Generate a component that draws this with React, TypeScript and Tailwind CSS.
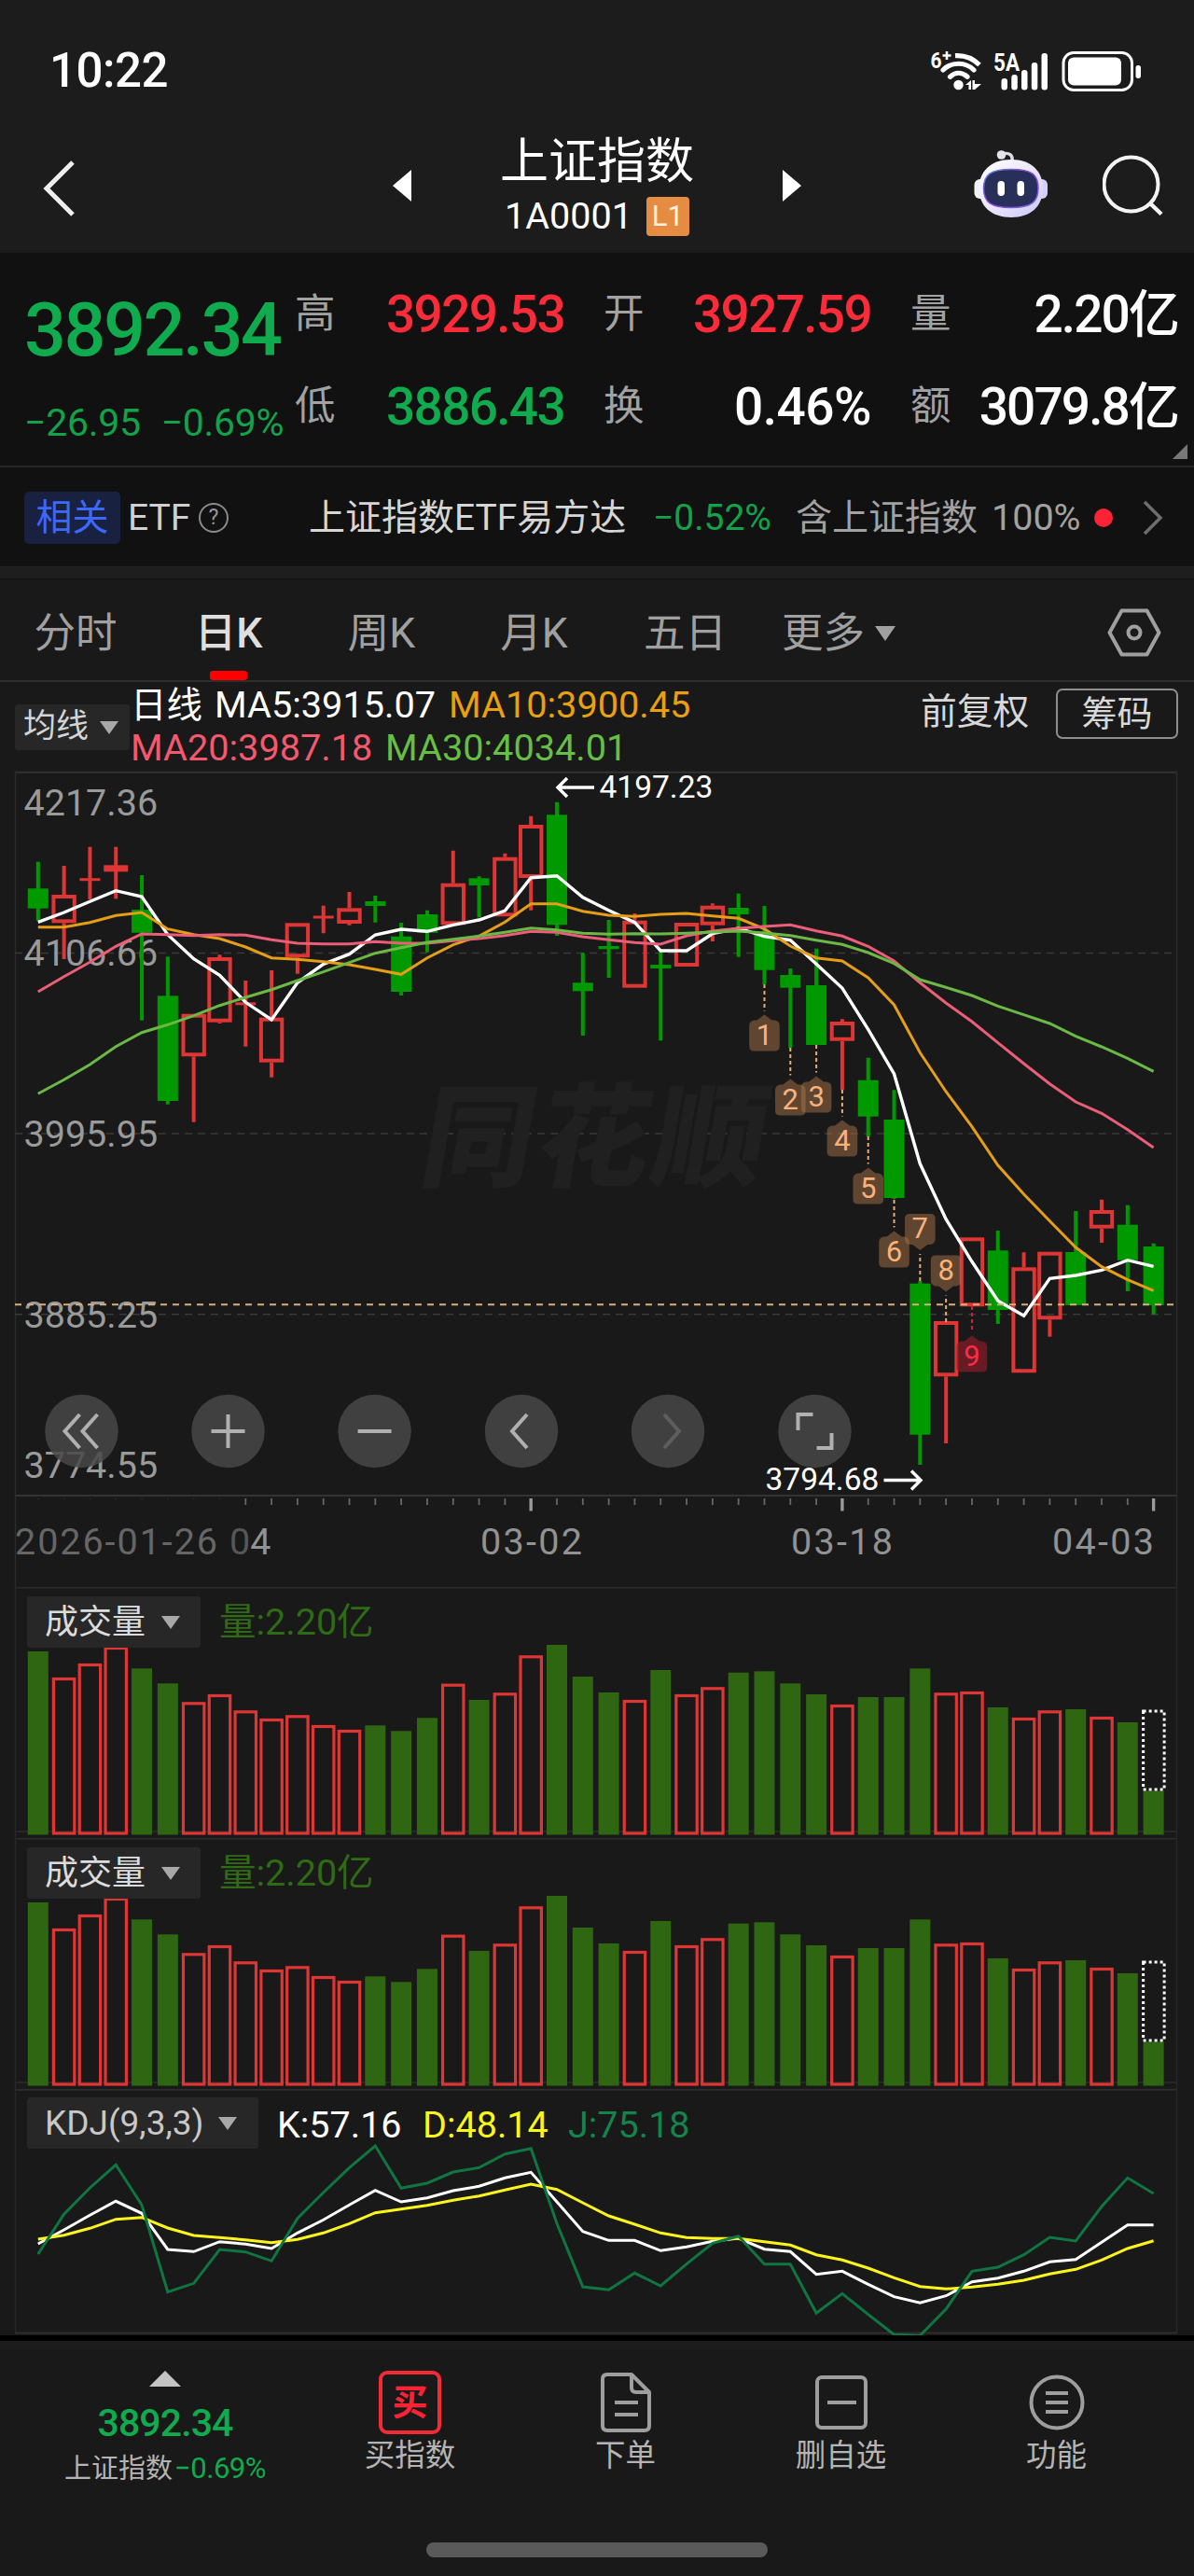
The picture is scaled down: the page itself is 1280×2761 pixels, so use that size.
import { useState } from "react";

// horizontal geometry shared by every chart panel
const firstX = 40.8;
const stepX = 27.81;
const xAt = (i: number) => firstX + i * stepX;

const red = "#de3535";
const green = "#009a00";

// [up|down, high, top, bottom, low]
type Candle = ["u" | "d", number, number, number, number];

const candles: Candle[] = [
    ["d", 923.7, 952.3, 973.7, 986.7],
    ["u", 928, 959, 989.3, 1028],
    ["u", 907.7, 941.2, 944.2, 964],
    ["u", 907.7, 927.3, 934.3, 963.3],
    ["d", 938, 975, 999.7, 1093.7],
    ["d", 1025.3, 1067.3, 1180, 1183.7],
    ["u", 1086.7, 1086.7, 1132.3, 1202.7],
    ["u", 1023.3, 1026, 1095.7, 1097],
    ["u", 1051, 1074.3, 1077.3, 1121.7],
    ["u", 1040, 1090.7, 1138.7, 1154.7],
    ["u", 989.3, 989.3, 1026.3, 1043.7],
    ["u", 970.7, 981.5, 984.5, 1000.3],
    ["u", 956, 973.3, 990, 991.7],
    ["d", 960, 966, 971, 988.7],
    ["d", 989, 1003.7, 1063, 1067],
    ["d", 975.7, 980, 999.7, 1020.7],
    ["u", 911.7, 946.7, 991.3, 991.3],
    ["d", 939.3, 941.3, 949, 983.3],
    ["u", 914.7, 918.7, 982.3, 982.3],
    ["u", 874.7, 884, 941, 975.7],
    ["d", 859.7, 873.3, 991.3, 1003],
    ["d", 1021.3, 1053.3, 1062.3, 1110],
    ["d", 986, 1014, 1017.3, 1048],
    ["u", 979, 986.7, 1058.7, 1058.7],
    ["d", 1020, 1034, 1038, 1115.3],
    ["u", 989, 989, 1036, 1036],
    ["u", 968.3, 970.7, 991.7, 1009],
    ["d", 957.7, 973, 980, 1025.7],
    ["d", 971, 1001, 1039.7, 1055],
    ["d", 1038, 1045, 1058.7, 1123],
    ["d", 1016.7, 1056, 1120, 1120],
    ["u", 1092.3, 1095, 1115.7, 1168.3],
    ["d", 1133.7, 1157.7, 1196.7, 1218.3],
    ["d", 1168.3, 1200, 1284, 1285],
    ["d", 1373, 1375.7, 1537.7, 1570],
    ["u", 1416, 1416, 1475.3, 1547],
    ["u", 1326.3, 1326.3, 1400.3, 1400.3],
    ["d", 1319, 1340.3, 1404, 1419],
    ["u", 1342.3, 1358.3, 1471.3, 1471.3],
    ["u", 1341.7, 1341.7, 1414.3, 1432.7],
    ["d", 1298, 1342, 1399, 1399],
    ["u", 1285.7, 1297, 1316.7, 1332],
    ["d", 1291.7, 1312.7, 1350.7, 1384],
    ["d", 1332.7, 1336, 1399, 1408.7],
];

const ma5 = [988.3, 978, 966.3, 954.7, 961, 1001.7, 1027.7, 1045.3, 1074.3, 1093, 1053.3, 1033.3, 1022.7, 1002, 996, 998.3, 991.3, 986, 976, 940.7, 938.7, 961.7, 975.7, 988.7, 1019, 1019, 1000.7, 995, 1003.7, 1007.7, 1033.3, 1059, 1103.3, 1151, 1247.3, 1306.7, 1352.3, 1394.3, 1410.3, 1370.3, 1367, 1361.3, 1350.7, 1357.3];
const ma10 = [993.7, 993.7, 988.7, 981.3, 978, 995.7, 1001.7, 1006, 1015, 1026.7, 1028.3, 1030.7, 1034, 1039, 1044.3, 1026.7, 1012.7, 1003.3, 988.3, 968.7, 968.7, 976.7, 981, 982.3, 980, 979, 981.7, 984.3, 995.7, 1014, 1026.7, 1030, 1048, 1077, 1128.3, 1170, 1207.7, 1249, 1280, 1308.7, 1337, 1357.7, 1371.7, 1383.3];
const ma20 = [1063, 1046.7, 1031.3, 1014.3, 1001, 1001.7, 1002.7, 1001.7, 1002.3, 1007.3, 1011, 1011.7, 1011.7, 1009.3, 1011, 1011, 1008.3, 1006, 1002.7, 998.3, 999.3, 1004, 1007.3, 1010.3, 1012, 1003, 998, 995, 993, 991.3, 997.7, 1003.3, 1014.3, 1030, 1053.3, 1075, 1095, 1117.7, 1140, 1161.7, 1181, 1193.3, 1210.7, 1230];
const ma30 = [1172.3, 1157.3, 1141, 1121.7, 1106.7, 1098.3, 1088.7, 1077.7, 1069, 1060.7, 1051, 1041.7, 1031.7, 1021.7, 1015.7, 1010, 1006.7, 1003.3, 999.3, 994.7, 996.7, 1000.3, 1001.3, 1000.7, 1001, 1000.3, 999, 998, 1000, 1002.7, 1007.7, 1012.3, 1021, 1032.7, 1050, 1058.3, 1067, 1078.3, 1087.7, 1097, 1110.7, 1122, 1134.3, 1148.3];

// bar tops inside a volume panel, same order as the candles
const volumeTops = [69, 97, 82, 64, 87.3, 103.3, 123.3, 115, 132.3, 141, 137.3, 148, 153, 148.3, 154.3, 140.3, 103.7, 121, 113.3, 73.3, 62, 96, 113, 121, 89, 115, 107.3, 91.7, 90.3, 103.3, 115, 126, 118, 118, 87.3, 113.3, 112, 129, 140, 132.3, 131, 139, 145, 218.5];

const kLine = [2405, 2390, 2374.3, 2359.3, 2372.3, 2411, 2413.3, 2402.7, 2405.3, 2410, 2393.3, 2379.3, 2363.3, 2347.7, 2360, 2355.7, 2348, 2343.3, 2334.3, 2328.3, 2360, 2391.7, 2401.3, 2401.3, 2412.3, 2408.3, 2402.3, 2399, 2410.7, 2413.3, 2437.7, 2434.3, 2448.3, 2461.7, 2468.3, 2460.7, 2445.7, 2441.7, 2434.3, 2424.3, 2421.7, 2403.3, 2384.7, 2384.7];
const dLine = [2400, 2395.7, 2388.3, 2378.7, 2376.7, 2388, 2396, 2398.3, 2400.7, 2403.7, 2400.3, 2393.3, 2383.3, 2371.7, 2367.7, 2363.7, 2358.3, 2353.7, 2347.3, 2341, 2346.7, 2361, 2375, 2384, 2393.3, 2398.3, 2399.3, 2399.3, 2402.7, 2406.3, 2416.7, 2422.3, 2431, 2441.3, 2450.7, 2453.3, 2451.3, 2448.3, 2444, 2437.3, 2432.3, 2422.3, 2410, 2401.7];
const jLine = [2416, 2373.3, 2345, 2320.3, 2363.3, 2456.7, 2447.3, 2411, 2413.7, 2423.3, 2377.7, 2350, 2323.3, 2300, 2345.3, 2340, 2328, 2323.3, 2308.7, 2302.7, 2383.3, 2451, 2454.3, 2436.3, 2450, 2426.7, 2404.3, 2396.7, 2426.7, 2426.7, 2479.3, 2458.3, 2480.7, 2502.3, 2503.3, 2475, 2434.3, 2430, 2416.7, 2398, 2402, 2365, 2334.3, 2351];

// nine-turn markers: index, label, y of the pointed tip, direction, start of the dotted lead
const turns = [
    { i: 28, n: "1", tip: 1087.5, up: true, from: 1055 },
    { i: 29, n: "2", tip: 1156.5, up: true, from: 1123 },
    { i: 30, n: "3", tip: 1153.5, up: true, from: 1120 },
    { i: 31, n: "4", tip: 1200.5, up: true, from: 1168 },
    { i: 32, n: "5", tip: 1251.5, up: true, from: 1218 },
    { i: 33, n: "6", tip: 1319.5, up: true, from: 1286 },
    { i: 34, n: "7", tip: 1340, up: false, from: 1373 },
    { i: 35, n: "8", tip: 1384.5, up: false, from: 1417 },
    { i: 36, n: "9", tip: 1431.5, up: true, from: 1400 },
];

const points = (ys: number[]) => ys.map((y, i) => `${xAt(i).toFixed(1)},${y}`).join(" ");

const Line = ({ ys, color, width = 3 }: { ys: number[]; color: string; width?: number }) => (
    <polyline points={points(ys)} fill="none" stroke={color} strokeWidth={width} />
);

const Caret = ({ className }: { className: string }) => (
    <svg viewBox="0 0 20 14" preserveAspectRatio="none" className={className}>
        <path d="M0 0H20L10 14Z" fill="currentColor" />
    </svg>
);

const StatusBar = () => (
    <div className="flex h-[130px] items-start justify-between pl-[53px] pr-[50px] pt-[50px]">
        <span className="text-[51px] font-medium leading-[52px] tracking-[-0.5px] text-white">10:22</span>
        <svg viewBox="990 50 240 52" className="h-[52px] w-[240px]" fill="white">
            <text x="997.5" y="73" fontSize="24" fontWeight="700" textLength="12" lengthAdjust="spacingAndGlyphs">6</text>
            <path d="M1010.5 59.5h9M1015 55v9" stroke="white" strokeWidth="2.6" />
            <circle cx="1027.5" cy="91" r="5.2" />
            <g fill="none" stroke="white" strokeWidth="5.2">
                <path d="M1024 59.6C1034 59 1043 62.500 1050 69.500" />
                <path d="M1011 75C1020 66 1035 66 1044 75" strokeLinecap="round" />
                <path d="M1018.500 82.300C1024 77 1031 77 1037 82.300" strokeLinecap="round" />
            </g>
            <path d="M1035 91L1041 86V96H1038.500V91ZM1042.500 86L1045 86V90H1052L1045 96H1042.500Z" />
            <text x="1065" y="76" fontSize="25" fontWeight="700" textLength="28" lengthAdjust="spacingAndGlyphs">5A</text>
            <rect x="1073.500" y="84" width="6.500" height="12.500" rx="3" />
            <rect x="1084.300" y="80" width="6.500" height="16.500" rx="3" />
            <rect x="1095" y="75" width="6.500" height="21.500" rx="3" />
            <rect x="1105.800" y="67" width="6.500" height="29.500" rx="3" />
            <rect x="1116.500" y="57" width="6.500" height="39.500" rx="3" />
            <rect x="1140" y="56.500" width="73.500" height="40" rx="11" fill="none" stroke="white" strokeWidth="3" />
            <rect x="1145" y="61.500" width="57" height="30" rx="6" />
            <rect x="1217.500" y="70" width="5.500" height="14" rx="2.700" />
        </svg>
    </div>
);

const Robot = () => (
    <svg viewBox="0 0 80 74" className="ml-[185px] mt-[30px] h-[74px] w-[80px]">
        <defs>
            <linearGradient id="shell" x1="0" y1="0" x2="1" y2="1">
                <stop offset="0" stopColor="#ffffff" />
                <stop offset="0.55" stopColor="#e9e4fb" />
                <stop offset="1" stopColor="#c9c6f7" />
            </linearGradient>
            <linearGradient id="rim" x1="0" y1="0" x2="1" y2="1">
                <stop offset="0" stopColor="#5b8fd8" />
                <stop offset="0.5" stopColor="#8a3fd0" />
                <stop offset="1" stopColor="#6a6df0" />
            </linearGradient>
        </defs>
        <path d="M30 5C38 3 42 6 41 13" fill="none" stroke="#dcdce4" strokeWidth="3.500" />
        <circle cx="29.500" cy="6" r="4.800" fill="#e4e4ea" />
        <rect x="0.500" y="32" width="14" height="21" rx="6" fill="#f1effa" />
        <rect x="65" y="32" width="14" height="21" rx="6" fill="#d4d0f6" />
        <path d="M40 11C62 11 74 24 74 42C74 61 61 73 40 73C19 73 5.500 61 5.500 42C5.500 24 18 11 40 11Z" fill="url(#shell)" />
        <path d="M40 21.500C62 21.500 69 27 69 42C69 57 61 62.500 40 62.500C19 62.500 10.500 57 10.500 42C10.500 27 18 21.500 40 21.500Z" fill="#28305a" stroke="url(#rim)" strokeWidth="1.500" />
        <rect x="25.500" y="34" width="7.500" height="16" rx="3.700" fill="white" />
        <rect x="46.500" y="34" width="7.500" height="16" rx="3.700" fill="white" />
    </svg>
);

const TitleBar = () => (
    <div className="flex h-[141px] items-start pl-[42px]">
        <svg viewBox="0 0 40 64" className="mt-[40px] h-[64px] w-[40px]" fill="none" stroke="#eeeeee" strokeWidth="5">
            <path d="M36 4L8 32L36 60" />
        </svg>
        <svg viewBox="0 0 20 34" className="ml-[339px] mt-[52px] h-[34px] w-[20px]">
            <path d="M20 0V34L0 17Z" fill="white" />
        </svg>
        <div className="ml-[86px] mt-[10px] flex w-[226px] flex-col items-center">
            <h1 className="whitespace-nowrap text-[52px] font-normal leading-[68px] text-white">上证指数</h1>
            <div className="mt-[2px] flex items-center gap-[15px]">
                <span className="text-[39.5px] leading-[44px] text-white">1A0001</span>
                <span className="flex h-[42px] w-[46px] items-center justify-center rounded-[4px] bg-[#e68c42] text-[31px] text-[#fff1e2]">L1</span>
            </div>
        </div>
        <svg viewBox="0 0 20 34" className="ml-[86px] mt-[52px] h-[34px] w-[20px]">
            <path d="M0 0V34L20 17Z" fill="white" />
        </svg>
        <Robot />
        <svg viewBox="0 0 68 68" className="ml-[58px] mt-[36px] h-[68px] w-[68px]" fill="none" stroke="#f4f4f4" strokeWidth="4">
            <circle cx="30.500" cy="31.500" r="29" />
            <path d="M51 52L63 63.500" strokeWidth="4.500" />
        </svg>
    </div>
);

const Stat = ({ label, value, color, className }: { label: string; value: string; color: string; className: string }) => (
    <div className={`flex items-center justify-between ${className}`}>
        <span className="text-[43.5px] leading-[60px] text-[#a2a2a2]">{label}</span>
        <span className={`whitespace-nowrap text-[55px] font-medium leading-[60px] ${color}`}>{value}</span>
    </div>
);

const Quote = () => (
    <div className="flex h-[230px] border-b-2 border-[#252525] bg-[#111111]">
        <div className="flex w-[316px] flex-col pl-[26px] pt-[37px]">
            <span className="text-[79px] font-medium leading-[92px] tracking-[-2.4px] text-[#0fab4e]">3892.34</span>
            <div className="mt-[29px] flex gap-[22px] whitespace-nowrap text-[41px] leading-[48px] tracking-[-0.3px] text-[#12a24c]">
                <span>−26.95</span>
                <span>−0.69%</span>
            </div>
        </div>
        <div className="flex flex-1 flex-col gap-[39px] pt-[36px]">
            <div className="flex">
                <Stat label="高" value="3929.53" color="tracking-[-1.7px] text-[#fb2c3a]" className="w-[289px]" />
                <Stat label="开" value="3927.59" color="tracking-[-1.7px] text-[#fb2c3a]" className="ml-[42px] w-[287px]" />
                <Stat label="量" value="2.20亿" color="tracking-[-1.9px] text-white" className="ml-[42px] w-[287px]" />
            </div>
            <div className="flex">
                <Stat label="低" value="3886.43" color="tracking-[-1.7px] text-[#0fab4e]" className="w-[289px]" />
                <Stat label="换" value="0.46%" color="tracking-[-0.5px] text-white" className="ml-[42px] w-[287px]" />
                <Stat label="额" value="3079.8亿" color="tracking-[-1.9px] text-white" className="ml-[42px] w-[287px]" />
            </div>
            <svg viewBox="0 0 16 16" className="-mt-[29px] mr-[7px] h-4 w-4 self-end">
                <path d="M16 0V16H0Z" fill="#777777" />
            </svg>
        </div>
    </div>
);

const RelatedEtf = () => (
    <div className="flex h-[107px] items-center whitespace-nowrap border-b border-[#222222] bg-[#111111] pl-[26px] pt-[2px] text-[39px]">
        <span className="flex h-[56px] w-[103px] items-center justify-center rounded-[5px] bg-[#192140] text-[#3c68fb]">相关</span>
        <span className="ml-[8px] w-[68px] text-[#d0d0d0]">ETF</span>
        <span className="ml-[8px] flex h-[32px] w-[32px] items-center justify-center rounded-full border-2 border-[#8a8a8a] text-[23px] text-[#999999]">?</span>
        <span className="ml-[86px] w-[343px] text-[#d6d6d6]">上证指数ETF易方达</span>
        <span className="ml-[26px] w-[128px] text-[#12a24c]">−0.52%</span>
        <span className="ml-[25px] text-[39px] text-[#a2a2a2]">含上证指数</span>
        <span className="ml-[15px] w-[98px] text-[39.5px] text-[#a2a2a2]">100%</span>
        <span className="ml-[12px] h-[20px] w-[20px] rounded-full bg-[#fb2334]" />
        <svg viewBox="0 0 22 40" className="ml-[32px] h-[40px] w-[22px]" fill="none" stroke="#6e6e6e" strokeWidth="3.500">
            <path d="M2 3L19 20L2 37" />
        </svg>
    </div>
);

const tabs = [
    { name: "分时", className: "w-[162px]" },
    { name: "日K", className: "w-[166px]" },
    { name: "周K", className: "w-[162px]" },
    { name: "月K", className: "w-[165px]" },
    { name: "五日", className: "w-[159px]" },
];

const Tabs = () => {
    const [active, setActive] = useState("日K");

    return (
        <div className="flex h-[111px] items-center border-b-2 border-[#2e2e2e] border-t border-t-[#111111]">
            {tabs.map((tab) => (
                <button
                    key={tab.name}
                    onClick={() => setActive(tab.name)}
                    className={`relative flex h-full items-center justify-center pt-[8px] text-[44.5px] ${tab.className} ${active == tab.name ? "font-medium text-[#dedede]" : "text-[#a0a0a0]"}`}
                >
                    {tab.name}
                    {active == tab.name && <span className="absolute bottom-0 h-[10px] w-[40px] rounded-[3px] bg-[#ff0000]" />}
                </button>
            ))}
            <button className="ml-[24px] flex items-center gap-[11px] pt-[8px] text-[44.5px] text-[#a0a0a0]">
                更多
                <Caret className="h-[16px] w-[22px]" />
            </button>
            <svg viewBox="0 0 58 52" className="ml-[227px] mt-[6px] h-[52px] w-[58px]" fill="none" stroke="#a0a0a0" strokeWidth="4">
                <path d="M15.500 2.500H42.500L55.500 26L42.500 49.500H15.500L2.500 26Z" strokeLinejoin="round" />
                <circle cx="29" cy="26" r="6.500" />
            </svg>
        </div>
    );
};

const Legend = () => (
    <div className="flex h-[96px] whitespace-nowrap pl-[16px]">
        <div className="mt-[24px] flex h-[49px] w-[123px] items-center justify-between rounded-[3px] bg-[#272727] pl-[9px] pr-[12px] text-[35px] text-[#d4d4d4]">
            均线
            <Caret className="h-[14px] w-[20px] text-[#a8a8a8]" />
        </div>
        <div className="ml-[1px] w-[761px] text-[39.7px] leading-[46px]">
            <div className="mt-[2px] flex text-white">
                <span className="text-[38.5px]">日线</span>
                <span className="ml-[13px] w-[251px]">MA5:3915.07</span>
                <span className="text-[#eaa00e]">MA10:3900.45</span>
            </div>
            <div className="flex">
                <span className="w-[273px] text-[#f4586f]">MA20:3987.18</span>
                <span className="text-[#66bf42]">MA30:4034.01</span>
            </div>
        </div>
        <span className="ml-[86px] mt-[7px] w-[118px] text-[38.8px] leading-[50px] text-[#d8d8d8]">前复权</span>
        <button className="ml-[27px] mt-[7px] flex h-[54px] w-[131px] items-center justify-center rounded-[7px] border-2 border-[#8e8e8e] text-[38px] text-[#d8d8d8]">
            筹码
        </button>
    </div>
);

const CandleShape = ({ candle, i }: { candle: Candle; i: number }) => {
    const [dir, high, top, bottom, low] = candle;
    const x = xAt(i);
    const h = bottom - top;

    if (dir == "d") {
        return (
            <g fill={green}>
                <rect x={x - 2} y={high} width="4" height={low - high} />
                <rect x={x - 11} y={top} width="22" height={h} />
            </g>
        );
    }
    // tiny bodies collapse into a solid cross
    if (h < 10) {
        return (
            <g fill={red}>
                <rect x={x - 2} y={high} width="4" height={low - high} />
                <rect x={h < 5 ? x - 11 : x - 13} y={top} width={h < 5 ? 22 : 26} height={h} />
            </g>
        );
    }
    return (
        <g>
            <path d={`M${x} ${high}V${top}M${x} ${bottom}V${low}`} stroke={red} strokeWidth="4" />
            <rect x={x - 11.2} y={top + 2} width="22.400" height={h - 4} fill="none" stroke={red} strokeWidth="4" />
        </g>
    );
};

const TurnMarker = ({ i, n, tip, up, from }: (typeof turns)[number]) => {
    const x = xAt(i);
    const isNine = n == "9";
    const s = up ? 1 : -1;
    const body = `M${x} ${tip}L${x + 8} ${tip + s * 6}H${x + 11}Q${x + 16.3} ${tip + s * 7} ${x + 16.3} ${tip + s * 12}V${tip + s * 34}Q${x + 16.3} ${tip + s * 39} ${x + 11} ${tip + s * 39}H${x - 11}Q${x - 16.3} ${tip + s * 39} ${x - 16.3} ${tip + s * 34}V${tip + s * 12}Q${x - 16.3} ${tip + s * 7} ${x - 11} ${tip + s * 6}H${x - 8}Z`;
    return (
        <g>
            <path d={`M${x} ${from}V${tip - s * 4}`} stroke={isNine ? "#c8243a" : "#e8ab7c"} strokeWidth="2" strokeDasharray="4 3" />
            <path d={body} fill={isNine ? "#8a1c26" : "#a8744a"} fillOpacity={isNine ? 0.7 : 0.5} />
            <text x={x} y={up ? tip + 32 : tip - 13} textAnchor="middle" fontSize="31" fill={isNine ? "#fb2c48" : "#fbb27a"}>{n}</text>
        </g>
    );
};

const controls = [
    { cx: 87.5, icon: "M-2 -18L-18 0L-2 18M17 -18L1 0L17 18", color: "#b0b0b0" },
    { cx: 244.5, icon: "M-18 0H18M0 -18V18", color: "#b0b0b0" },
    { cx: 401.6, icon: "M-18 0H18", color: "#b0b0b0" },
    { cx: 559, icon: "M6 -18L-10 0L6 18", color: "#b0b0b0" },
    { cx: 716, icon: "M-4 -18L12 0L-4 18", color: "#5e5e5e" },
    { cx: 873.5, icon: "M-2 -18H-18V-1M2 18H18V2", color: "#b0b0b0" },
];

const PriceChart = () => (
    <svg viewBox="0 827 1280 874" className="block h-[874px] w-full overflow-visible">
        <g fill="none" stroke="#2b2b2b" strokeWidth="1.500">
            <path d="M16 827.800H1262M16 1603H1262" stroke="#333333" strokeWidth="2" />
            <path d="M16.500 827V1701M1261.500 827V1701" />
            <path d="M16 1021.500H1262M16 1215H1262M16 1408.800H1262" stroke="#3a3a3a" strokeDasharray="8 6" />
        </g>
        <text x="0" y="0" transform="translate(447 1262) skewX(-10)" fontSize="120" fontWeight="900" fill="#202020" textLength="368">同花顺</text>

        <g fontSize="39.500" fill="#9a9a9a">
            <text x="25.500" y="873.500">4217.36</text>
            <text x="25.500" y="1035">4106.66</text>
            <text x="25.500" y="1229">3995.95</text>
            <text x="25.500" y="1422.500">3885.25</text>
            <text x="25.500" y="1583.500">3774.55</text>
        </g>

        {candles.map((candle, i) => <CandleShape key={i} candle={candle} i={i} />)}

        <Line ys={ma5} color="#ffffff" width={3.4} />
        <Line ys={ma10} color="#e59e16" />
        <Line ys={ma20} color="#ea5e78" />
        <Line ys={ma30} color="#6bb944" />

        <path d="M16 1398.200H1262" stroke="#d5b07c" strokeWidth="2" strokeDasharray="7 6" />

        {turns.map((turn) => <TurnMarker key={turn.n} {...turn} />)}

        <g fill="none" stroke="white" strokeWidth="3.400">
            <path d="M637 844H598M608 834L598 844L608 854" />
            <path d="M947.500 1586.500H987M977 1576.500L987 1586.500L977 1596.500" />
        </g>
        <g fontSize="33.500" fill="white">
            <text x="642.500" y="854.500">4197.23</text>
            <text x="820.500" y="1597">3794.68</text>
        </g>

        {controls.map((c) => (
            <g key={c.cx} transform={`translate(${c.cx} 1534)`}>
                <circle r="39.200" fill="#484848" fillOpacity="0.85" />
                <path d={c.icon} fill="none" stroke={c.color} strokeWidth="4" />
            </g>
        ))}

        {candles.map((_, i) => {
            const major = i == 19 || i == 31 || i == 43;
            return (
                <path
                    key={i}
                    d={`M${xAt(i)} 1606V${major ? 1619.5 : i < 8 ? 1607 : 1613}`}
                    stroke={major ? "#9a9a9a" : i < 8 ? "#333333" : "#666666"}
                    strokeWidth={major ? 3.4 : 1.8}
                />
            );
        })}
        <g fontSize="39.500" fill="#929292">
            <text x="16" y="1666" fill="#666666" textLength="217">2026-01-26</text>
            <text x="246" y="1666"><tspan fill="#565656">0</tspan><tspan>4</tspan></text>
            <text x="515" y="1666" textLength="109">03-02</text>
            <text x="848" y="1666" textLength="109">03-18</text>
            <text x="1128" y="1666" textLength="109">04-03</text>
        </g>
    </svg>
);

const VolumePanel = () => (
    <div className="relative h-[269px]">
        <svg viewBox="0 0 1280 269" className="absolute inset-0 h-full w-full">
            <path d="M16 0.800H1262M16 262H1262" stroke="#2c2c2c" strokeWidth="1.600" />
            <path d="M16.500 0V269M1261.500 0V269" stroke="#272727" strokeWidth="1.500" />
            {volumeTops.map((top, i) =>
                candles[i][0] == "d" ? (
                    <rect key={i} x={xAt(i) - 11} y={top} width="22" height={265.5 - top} fill="#2f6612" />
                ) : (
                    <rect key={i} x={xAt(i) - 11.2} y={top + 1.5} width="22.400" height={262.5 - top} fill="none" stroke={red} strokeWidth="3.200" />
                )
            )}
            <rect x={xAt(43) - 11} y="133" width="22.500" height="84" fill="none" stroke="white" strokeWidth="3" strokeDasharray="3 3" />
        </svg>
        <div className="relative flex items-start pl-[29px] pt-[10px]">
            <div className="flex h-[55px] w-[186px] items-center justify-between rounded-[3px] bg-[#272727] pl-[19px] pr-[22px] text-[36px] text-[#dcdcdc]">
                成交量
                <Caret className="h-[14px] w-[20px] text-[#a8a8a8]" />
            </div>
            <span className="ml-[20px] text-[39.5px] leading-[56px] text-[#2f6a14]">量:2.20亿</span>
        </div>
    </div>
);

const KdjPanel = () => (
    <div className="relative h-[264px]">
        <svg viewBox="0 2239 1280 264" className="absolute inset-0 h-full w-full">
            <path d="M16 2239.800H1262M16 2500.500H1262" stroke="#2e2e2e" strokeWidth="1.800" />
            <path d="M16.500 2239V2500M1261.500 2239V2500" stroke="#272727" strokeWidth="1.500" />
            <Line ys={kLine} color="#ffffff" />
            <Line ys={dLine} color="#fbf51c" />
            <Line ys={jLine} color="#0f7641" />
        </svg>
        <div className="relative flex items-start whitespace-nowrap pl-[29px] pt-[9px]">
            <div className="flex h-[55px] w-[248px] items-center justify-between rounded-[3px] bg-[#272727] pl-[19px] pr-[23px] text-[37px] text-[#c8c8c8]">
                KDJ(9,3,3)
                <Caret className="h-[14px] w-[20px] text-[#a8a8a8]" />
            </div>
            <div className="ml-[20px] flex text-[39.5px] leading-[59px]">
                <span className="w-[156px] text-white">K:57.16</span>
                <span className="w-[156px] text-[#fbf51c]">D:48.14</span>
                <span className="text-[#15834b]">J:75.18</span>
            </div>
        </div>
    </div>
);

const NavItem = ({ label, className, children }) => (
    <button className={`flex flex-col items-center pt-[18px] text-[32.5px] text-[#b4b4b4] ${className}`}>
        <span className="flex h-[76px] items-center justify-center">{children}</span>
        <span className="leading-[38px]">{label}</span>
    </button>
);

const BottomNav = () => (
    <div className="flex h-[252px] flex-col border-t-[10px] border-[#1c1c1c]">
        <div className="flex">
            <div className="flex w-[354px] flex-col items-center whitespace-nowrap pt-[22px]">
                <svg viewBox="0 0 34 17" className="h-[17px] w-[34px]"><path d="M17 0L34 17H0Z" fill="#c4c4c4" /></svg>
                <span className="mt-[15px] text-[41px] font-medium leading-[48px] tracking-[-0.9px] text-[#0fab4e]">3892.34</span>
                <div className="mt-[5px] flex items-center gap-[2px] text-[29px] leading-[40px] text-[#b4b4b4]">
                    上证指数
                    <span className="text-[31px] tracking-[-0.5px] text-[#0fab4e]">−0.69%</span>
                </div>
            </div>
            <NavItem label="买指数" className="w-[171px]">
                <span className="flex h-[68px] w-[67px] items-center justify-center rounded-[9px] border-4 border-[#f22b36] text-[38px] font-bold leading-none text-[#fb2334]">买</span>
            </NavItem>
            <NavItem label="下单" className="ml-[60px] w-[171px]">
                <svg viewBox="0 0 54 64" className="h-[64px] w-[54px]" fill="none" stroke="#9e9e9e" strokeWidth="4" strokeLinejoin="round">
                    <path d="M7 2H33L52 21V57Q52 62 47 62H7Q2 62 2 57V7Q2 2 7 2Z" />
                    <path d="M33 2V16Q33 21 38 21H52M15 32H40M15 45H40" />
                </svg>
            </NavItem>
            <NavItem label="删自选" className="ml-[60px] w-[171px]">
                <svg viewBox="0 0 56 58" className="h-[58px] w-[56px]" fill="none" stroke="#9e9e9e" strokeWidth="4">
                    <rect x="2" y="2" width="52" height="54" rx="5" />
                    <path d="M13 29H44" />
                </svg>
            </NavItem>
            <NavItem label="功能" className="ml-[60px] w-[171px]">
                <svg viewBox="0 0 60 60" className="h-[60px] w-[60px]" fill="none" stroke="#9e9e9e" strokeWidth="4">
                    <circle cx="30" cy="30" r="27.500" />
                    <path d="M18 20H42M18 30H42M18 40H42" />
                </svg>
            </NavItem>
        </div>
        <div className="mb-[20px] mt-auto h-[16px] w-[366px] self-center rounded-[8px] bg-[#5a5a5a]" />
    </div>
);

const App = () => {
    return (
        <div className="flex h-[2761px] w-[1280px] flex-col overflow-hidden bg-[#191919] font-[Roboto,'Noto_Sans_CJK_SC',sans-serif]">
            <div className="bg-[#1c1c1c]">
                <StatusBar />
                <TitleBar />
            </div>
            <Quote />
            <RelatedEtf />
            <div className="h-[12px] bg-[#1e1e1e]" />
            <Tabs />
            <Legend />
            <PriceChart />
            <VolumePanel />
            <VolumePanel />
            <KdjPanel />
            <div className="h-[6px] bg-black" />
            <BottomNav />
        </div>
    );
};
export default App;
